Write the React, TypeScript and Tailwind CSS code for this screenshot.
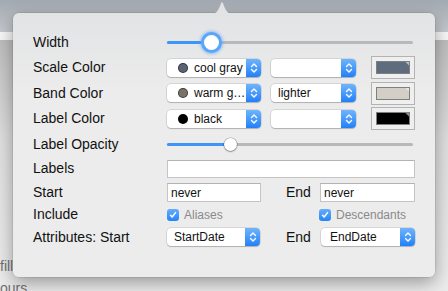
import React from "react";

function Stepper() {
  return (
    <div className="flex h-full w-[15px] items-center justify-center rounded-r-[4px] bg-gradient-to-b from-[#6db4fb] to-[#1f80f8]">
      <svg width="8" height="12" viewBox="0 0 8 12" fill="none" stroke="white" strokeWidth="1.4" strokeLinecap="round" strokeLinejoin="round">
        <path d="M1.5 4.5 L4 2 L6.5 4.5" />
        <path d="M1.5 7.5 L4 10 L6.5 7.5" />
      </svg>
    </div>
  );
}

function Popup({ className, children }: { className: string; children?: React.ReactNode }) {
  return (
    <div className={`flex h-[18px] items-center rounded-[4px] bg-white text-[12px] shadow-[0_0_0_0.5px_rgba(0,0,0,0.18),0_1px_1px_rgba(0,0,0,0.18)] ${className}`}>
      <div className="flex min-w-0 flex-1 items-center overflow-hidden whitespace-nowrap">{children}</div>
      <Stepper />
    </div>
  );
}

function Dot({ color }: { color: string }) {
  return (
    <span
      className="mr-[6px] ml-[11px] inline-block h-[10px] w-[10px] shrink-0 rounded-full border border-black/50"
      style={{ backgroundColor: color }}
    />
  );
}

function Well({ color }: { color: string }) {
  return (
    <div className="h-[23px] w-[44px] border border-[#b3b3b3] bg-[#efefef] p-[4px]">
      <div className="relative h-full border border-[#7f7f7f]" style={{ backgroundColor: color }}>
        <svg className="absolute right-0 top-0" width="4" height="4" viewBox="0 0 4 4">
          <path d="M0.5 0 H4 V3.5 Z" fill="rgba(255,255,255,0.55)" />
        </svg>
      </div>
    </div>
  );
}

function Check() {
  return (
    <span className="flex h-[12px] w-[12px] shrink-0 items-center justify-center rounded-[3px] bg-gradient-to-b from-[#63adfb] to-[#2384f8]">
      <svg width="8" height="8" viewBox="0 0 8 8" fill="none" stroke="white" strokeWidth="1.5" strokeLinecap="round" strokeLinejoin="round">
        <path d="M1.5 4.3 L3.2 6 L6.5 1.6" />
      </svg>
    </span>
  );
}

function Row({ label, className, children }: { label: string; className: string; children?: React.ReactNode }) {
  return (
    <div className={`flex items-center ${className}`}>
      <div className="w-[134px] shrink-0 text-[14px]">{label}</div>
      <div className="flex flex-1 items-center">{children}</div>
    </div>
  );
}

export default function App() {
  return (
    <div className="relative h-[291px] w-[448px] overflow-hidden bg-[#ececec] font-['Liberation_Sans',Arial,sans-serif] text-[13px] text-[#111]">
      {/* Window behind the popover */}
      <div className="h-[32px] bg-gradient-to-b from-[#a2a9b1] to-[#c6c9cd]" />
      <div className="h-[8px] bg-[#f7f7f7]" />
      <div className="h-[251px] bg-gradient-to-b from-[#bdbdbd] via-[#dfdfdf] via-40% to-[#ececec] pt-[215px] text-[14px] leading-[22px] text-[#707070]">
        <div>fill</div>
        <div>ours</div>
      </div>

      {/* Popover */}
      <div className="absolute left-[13px] top-[13px] h-[264px] w-[422px] rounded-[6px] bg-gradient-to-b from-[#e2e3e5] to-[#ececec] to-30% px-[20px] pt-[16px] shadow-[0_0_0_0.5px_rgba(0,0,0,0.15),0_6px_18px_rgba(0,0,0,0.35)]">
        <svg className="absolute left-[198px] top-[-12px]" width="22" height="13" viewBox="0 0 22 13">
          <path d="M0 13 C5 13 7 10 9 5 L10.1 2 Q11 0.3 11.9 2 L13 5 C15 10 17 13 22 13 Z" fill="#e2e3e5" />
        </svg>

        <Row label="Width" className="h-[26px]">
          <div className="relative h-[3px] w-[246px] rounded-full bg-[#b9b9b9]">
            <div className="h-full w-[44px] rounded-l-full bg-[#3e95f7]" />
            <div className="absolute left-[34px] top-[-9px] h-[21px] w-[21px] rounded-full border-[3px] border-[#5aa6f8] bg-white shadow-[0_0_3px_1px_rgba(90,160,250,0.55)]" />
          </div>
        </Row>

        <Row label="Scale Color" className="h-[25px]">
          <Popup className="w-[94px]">
            <Dot color="#5b6472" />
            <span>cool gray</span>
          </Popup>
          <Popup className="ml-[10px] w-[85px]" />
          <div className="ml-[15px]">
            <Well color="#5f6c7e" />
          </div>
        </Row>

        <Row label="Band Color" className="h-[26px]">
          <Popup className="w-[94px]">
            <Dot color="#7a7468" />
            <span>warm g…</span>
          </Popup>
          <Popup className="ml-[10px] w-[85px]">
            <span className="pl-[7px]">lighter</span>
          </Popup>
          <div className="ml-[15px]">
            <Well color="#d3cfc7" />
          </div>
        </Row>

        <Row label="Label Color" className="h-[25px]">
          <Popup className="w-[94px]">
            <Dot color="#000000" />
            <span>black</span>
          </Popup>
          <Popup className="ml-[10px] w-[85px]" />
          <div className="ml-[15px]">
            <Well color="#000000" />
          </div>
        </Row>

        <Row label="Label Opacity" className="h-[26px]">
          <div className="relative h-[3px] w-[246px] rounded-full bg-[#b9b9b9]">
            <div className="h-full w-[60px] rounded-l-full bg-[#3e95f7]" />
            <div className="absolute left-[57px] top-[-5px] h-[13px] w-[13px] rounded-full bg-white shadow-[0_0_0_0.5px_rgba(0,0,0,0.3),0_1px_1.5px_rgba(0,0,0,0.3)]" />
          </div>
        </Row>

        <Row label="Labels" className="h-[23px]">
          <div className="h-[18px] w-[248px] border border-[#c4c4c4] border-t-[#b3b3b3] bg-white" />
        </Row>

        <Row label="Start" className="h-[25px]">
          <div className="flex h-[19px] w-[94px] items-center border border-[#c4c4c4] border-t-[#b3b3b3] bg-white pl-[3px] text-[12px]">never</div>
          <div className="w-[59px] pl-[25px] text-[14px]">End</div>
          <div className="flex h-[19px] w-[95px] items-center border border-[#c4c4c4] border-t-[#b3b3b3] bg-white pl-[3px] text-[12px]">never</div>
        </Row>

        <Row label="Include" className="h-[19px]">
          <div className="flex w-[152px] items-center">
            <Check />
            <span className="ml-[5px] text-[12px] text-[#8a8a8a]">Aliases</span>
          </div>
          <div className="flex items-center">
            <Check />
            <span className="ml-[5px] text-[12px] text-[#8a8a8a]">Descendants</span>
          </div>
        </Row>

        <Row label="Attributes: Start" className="h-[26px]">
          <Popup className="w-[93px]">
            <span className="pl-[7px]">StartDate</span>
          </Popup>
          <div className="w-[61px] pl-[26px] text-[14px]">End</div>
          <Popup className="w-[94px]">
            <span className="pl-[9px]">EndDate</span>
          </Popup>
        </Row>
      </div>
    </div>
  );
}
